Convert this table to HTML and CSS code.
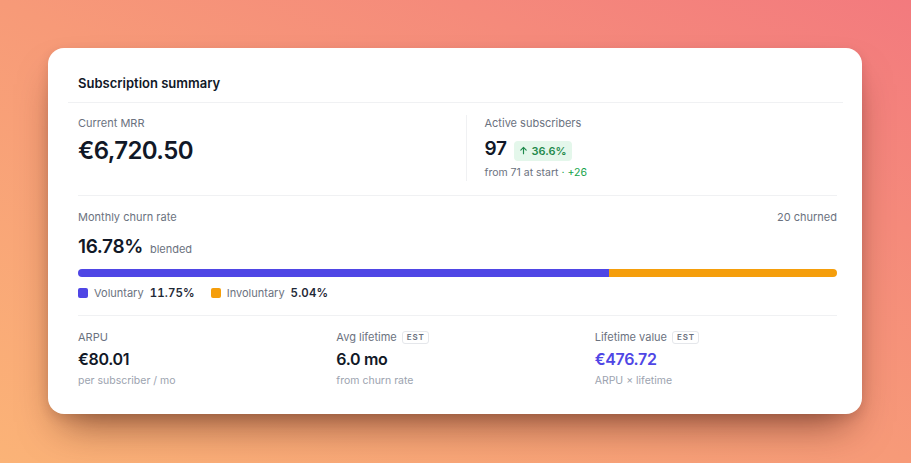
FILE: index.html
```html
<!DOCTYPE html>
<html lang="en">
<head>
<meta charset="utf-8">
<title>Subscription summary</title>
<link rel="stylesheet" href="styles.css">
</head>
<body>
<main class="stage">
  <section class="card">
    <header class="card-head">Subscription summary</header>

    <div class="sec sec-top">
      <div class="stat">
        <div class="label">Current MRR</div>
        <div class="big">€6,720.50</div>
      </div>
      <div class="stat stat-split">
        <div class="label">Active subscribers</div>
        <div class="row-base">
          <span class="mid">97</span>
          <span class="pill">
            <svg class="arrow" viewBox="0 0 10 10" width="9" height="9" aria-hidden="true"><path d="M5 8.5V1.8M2 4.6L5 1.6L8 4.6" fill="none" stroke="currentColor" stroke-width="1.3" stroke-linecap="round" stroke-linejoin="round"/></svg>36.6%
          </span>
        </div>
        <div class="sub">from 71 at start <span class="pos">· +26</span></div>
      </div>
    </div>

    <div class="sec sec-churn">
      <div class="row-between">
        <span class="label">Monthly churn rate</span>
        <span class="label">20 churned</span>
      </div>
      <div class="row-base churn-val">
        <span class="mid">16.78%</span>
        <span class="muted">blended</span>
      </div>
      <div class="bar">
        <div class="seg seg-vol" style="width:69.98%"></div>
        <div class="seg seg-inv"></div>
      </div>
      <div class="legend">
        <span class="key"><i class="sw sw-vol"></i>Voluntary <b>11.75%</b></span>
        <span class="key"><i class="sw sw-inv"></i>Involuntary <b>5.04%</b></span>
      </div>
    </div>

    <div class="sec sec-bottom">
      <div class="stat">
        <div class="label">ARPU</div>
        <div class="val">€80.01</div>
        <div class="sub light">per subscriber / mo</div>
      </div>
      <div class="stat">
        <div class="label">Avg lifetime <span class="est">EST</span></div>
        <div class="val">6.0 mo</div>
        <div class="sub light">from churn rate</div>
      </div>
      <div class="stat">
        <div class="label">Lifetime value <span class="est">EST</span></div>
        <div class="val accent">€476.72</div>
        <div class="sub light">ARPU × lifetime</div>
      </div>
    </div>
  </section>
</main>
</body>
</html>
```

FILE: styles.css
```css
* { box-sizing: border-box; }
html, body { margin: 0; padding: 0; }
body {
  width: 911px;
  height: 463px;
  overflow: hidden;
  font-family: Inter, "Noto Sans", "Liberation Sans", sans-serif;
  color: #111827;
  background: linear-gradient(to top right, #fbb377 0%, #f79a78 50%, #f37a7e 100%);
}
.stage {
  padding: 48px 49px 49px 48px;
  height: 463px;
}
.card {
  background: #fff;
  border-radius: 16px;
  height: 366px;
  padding: 18px 19px 13px 20px;
  box-shadow: 0 22px 40px -14px rgba(60, 20, 10, 0.6), 0 4px 12px rgba(60, 20, 10, 0.12);
}
.card-head {
  font-size: 13px;
  font-weight: 600;
  line-height: 16px;
  padding: 9px 10px 11px;
  border-bottom: 1px solid #f0f1f3;
  color: #111827;
}
.sec {
  margin: 0 6px 0 10px;
  border-bottom: 1px solid #f0f1f3;
}
.sec-bottom { border-bottom: 0; }
.sec-top {
  display: grid;
  grid-template-columns: 1fr 1fr;
  column-gap: 16px;
  padding: 12px 0 14px;
}
.sec-churn { padding: 13px 0 14px; }
.sec-bottom {
  display: grid;
  grid-template-columns: 1fr 1fr 1fr;
  column-gap: 16px;
  padding: 13px 0 12px;
}
.stat-split {
  border-left: 1px solid #f0f1f3;
  padding-left: 18px;
}
.label {
  font-size: 11px;
  line-height: 16px;
  color: #6b7280;
  display: flex;
  align-items: center;
}
.big {
  margin-top: 4px;
  font-size: 24px;
  line-height: 32px;
  font-weight: 600;
  letter-spacing: -0.025em;
  color: #111827;
}
.row-base {
  margin-top: 4px;
  display: flex;
  align-items: baseline;
  gap: 8px;
  height: 28px;
  line-height: 28px;
}
.mid {
  font-size: 19px;
  font-weight: 600;
  letter-spacing: -0.02em;
  color: #111827;
}
.pill {
  display: inline-flex;
  align-items: center;
  gap: 3px;
  font-size: 11px;
  line-height: 14px;
  font-weight: 600;
  color: #1f8a4c;
  background: #e4f7eb;
  border-radius: 4px;
  padding: 3px 6px 3px 5px;
}
.arrow { display: block; }
.sub {
  margin-top: 2px;
  font-size: 10.5px;
  line-height: 16px;
  color: #6b7280;
}
.sub.light { color: #9ca3af; }
.pos { color: #16a34a; }
.row-between {
  display: flex;
  justify-content: space-between;
}
.churn-val { margin-top: 8px; gap: 7px; }
.muted {
  font-size: 11px;
  line-height: 14px;
  color: #6b7280;
}
.bar {
  margin-top: 8px;
  height: 8px;
  border-radius: 4px;
  overflow: hidden;
  display: flex;
}
.seg { height: 100%; }
.seg-vol { background: #4f46e5; }
.seg-inv { background: #f59e0b; flex: 1; }
.legend {
  margin-top: 8px;
  display: flex;
  gap: 16px;
  font-size: 11px;
  line-height: 16px;
  color: #6b7280;
}
.key { display: inline-flex; align-items: center; }
.key b {
  color: #1f2937;
  font-size: 11.5px;
  font-weight: 600;
  letter-spacing: 0.01em;
  font-variant-numeric: tabular-nums;
  margin-left: 6px;
}
.sw {
  width: 10px;
  height: 10px;
  border-radius: 2px;
  margin-right: 6px;
  display: inline-block;
}
.sw-vol { background: #4f46e5; }
.sw-inv { background: #f59e0b; }
.val {
  margin-top: 2px;
  font-size: 16px;
  line-height: 24px;
  font-weight: 600;
  letter-spacing: -0.02em;
  color: #111827;
}
.val.accent { color: #4f46e5; }
.est {
  margin-left: 5px;
  font-size: 8px;
  line-height: 9px;
  font-weight: 600;
  letter-spacing: 0.1em;
  color: #6b7280;
  border: 1px solid #e5e7eb;
  border-radius: 3px;
  padding: 1px 3px 1px 4px;
}
```
